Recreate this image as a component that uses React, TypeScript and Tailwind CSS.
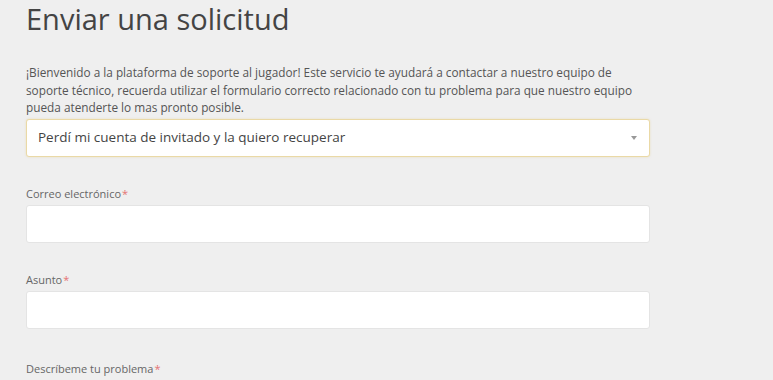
function Field({ label }: { label: string }) {
    return (
        <div className="flex flex-col">
            <label className="text-[11px] leading-[17px] text-[#666]">
                {label}
                <span className="text-[#e57373] ml-[1px]">*</span>
            </label>
            <input
                type="text"
                className="mt-[3px] h-[38px] w-full rounded-[3px] border border-[#e4e4e4] bg-white outline-none"
            />
        </div>
    )
}

export default function App() {
    return (
        <div className="min-h-[380px] bg-[#efefef] font-['Open_Sans',sans-serif]">
            <div id="request-form" className="w-[650px] pl-[26px] flex flex-col">
                <h1 className="text-[29px] leading-[38px] text-[#444] font-normal">Enviar una solicitud</h1>
                <p className="mt-[26px] text-[11.8px] leading-[17.5px] text-[#555] whitespace-nowrap">
                    ¡Bienvenido a la plataforma de soporte al jugador! Este servicio te ayudará a contactar a nuestro equipo de
                    <br />
                    soporte técnico, recuerda utilizar el formulario correcto relacionado con tu problema para que nuestro equipo
                    <br />
                    pueda atenderte lo mas pronto posible.
                </p>
                <div className="mt-[2px] h-[38px] rounded-[3px] border border-[#ead9a6] bg-white flex items-center justify-between pl-[11px] pr-[10px] shadow-[0_0_2px_rgba(230,210,150,0.6)]">
                    <span className="text-[13.5px] text-[#444]">Perdí mi cuenta de invitado y la quiero recuperar</span>
                    <svg width="6" height="4" viewBox="0 0 6 4" className="mr-[2px]">
                        <path d="M0 0 L6 0 L3 4 Z" fill="#999" />
                    </svg>
                </div>
                <div className="mt-[28px]">
                    <Field label="Correo electrónico" />
                </div>
                <div className="mt-[28px]">
                    <Field label="Asunto" />
                </div>
                <label className="mt-[31px] text-[11px] leading-[17px] text-[#666]">
                    Descríbeme tu problema
                    <span className="text-[#e57373] ml-[1px]">*</span>
                </label>
            </div>
        </div>
    )
}
